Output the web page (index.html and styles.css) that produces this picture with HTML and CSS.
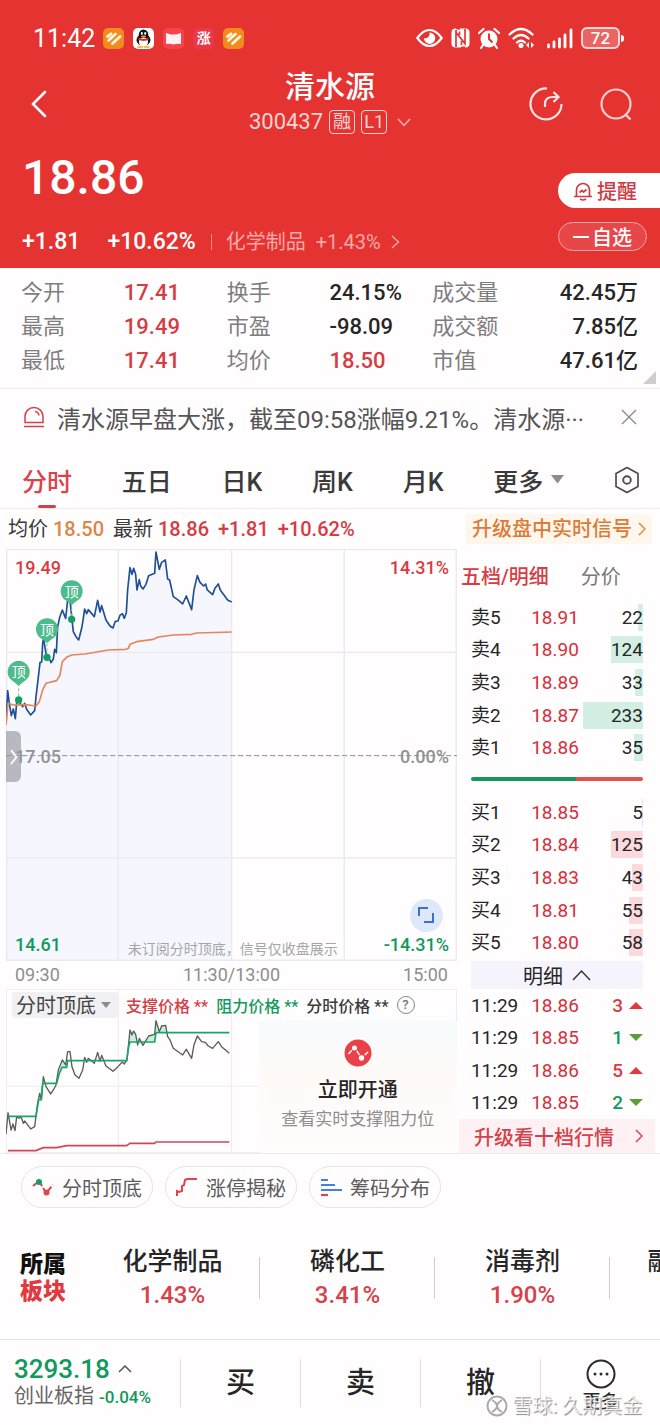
FILE: index.html
```html
<!DOCTYPE html>
<html lang="zh-CN">
  <head>
    <meta charset="UTF-8" />
    <meta name="viewport" content="width=device-width, initial-scale=1.0" />
    <title>清水源 300437</title>
    <link rel="stylesheet" href="styles.css">
  </head>
  <body>
    <header class="header">
      <div class="status">
        <span class="clock">11:42</span>
        <div class="apps">
          <svg viewBox="0 0 21 21"><rect width="21" height="21" rx="5" fill="#f28a1c"/><path d="M4.500 8.500 8 5.800M5.500 12.500l7-6.500M9.500 15.500l7.500-7" stroke="#fff3d8" stroke-width="2.900" fill="none" stroke-linecap="round"/></svg>
          <svg viewBox="0 0 21 21"><rect width="21" height="21" rx="5" fill="#fff"/><ellipse cx="10.500" cy="12" rx="7" ry="6" fill="#111"/><ellipse cx="10.500" cy="7" rx="4.800" ry="5.500" fill="#111"/><ellipse cx="10.500" cy="14" rx="4.600" ry="4.600" fill="#fff"/><path d="M5.500 9.500q5 3 10 0l.3 2.300q-5 2.200-10.600 0z" fill="#e02a2a"/><ellipse cx="8.800" cy="5.500" rx="1" ry="1.400" fill="#fff"/><ellipse cx="12.200" cy="5.500" rx="1" ry="1.400" fill="#fff"/><ellipse cx="10.500" cy="8.300" rx="2.600" ry=".9" fill="#f4a81c"/><path d="M5 19h4.500M11.500 19H16" stroke="#f4a81c" stroke-width="1.600" stroke-linecap="round"/></svg>
          <svg viewBox="0 0 21 21"><rect width="21" height="21" rx="5" fill="#f3434f"/><path d="M3 5q3 .5 4.500 1.500h6Q15 5.500 18 5v11q-4-.6-7.500.6Q7 15.400 3 16z" fill="#fff1ee"/></svg>
          <span class="app-text">涨</span>
          <svg viewBox="0 0 21 21"><rect width="21" height="21" rx="5" fill="#f28a1c"/><path d="M4.500 8.500 8 5.800M5.500 12.500l7-6.500M9.500 15.500l7.500-7" stroke="#fff3d8" stroke-width="2.900" fill="none" stroke-linecap="round"/></svg>
        </div>
        <div class="signals">
          <svg width="27" height="20" viewBox="0 0 27 20"><path d="M1.300 10Q7 2 13.500 2t12.200 8Q20 18 13.500 18T1.300 10z" fill="none" stroke="#fff" stroke-width="2.200"/><path d="M13.500 4.500a5.700 5.700 0 1 1-5.600 5.500q2.800.8 4.500-.9t1.100-4.600z" fill="#fff"/></svg>
          <svg width="19" height="20" viewBox="0 0 19 20"><rect x=".5" y=".5" width="18" height="19" rx="4" fill="#fff"/><path d="M5 19V4.500l9 11V1M9 1l-4-.5M10 19.500 14 19M5 6.500V2M8.500 3.500 8.500 7M10.500 13v4" fill="none" stroke="#e43331" stroke-width="1.700"/></svg>
          <svg width="22" height="22" viewBox="0 0 22 22"><circle cx="11" cy="12" r="8.500" fill="#fff"/><path d="M1 6 5.500 2M21 6l-4.500-4M5 18l-2 3M17 18l2 3" stroke="#fff" stroke-width="2.200" stroke-linecap="round"/><path d="M11 6.500V12l3.500 3.500" stroke="#e43331" stroke-width="2" fill="none"/></svg>
          <svg width="27" height="22" viewBox="0 0 27 22"><path d="M1.500 7.500q11.500-11 23 0M5.500 11.500q7.500-7 15 0M9 15.500q4-3.500 8 0" fill="none" stroke="#fff" stroke-width="2.300" stroke-linecap="round"/><circle cx="13" cy="18.500" r="2.500" fill="#fff"/><path d="M18 18l3-3v6zM26 18l-3-3v6z" fill="#fff"/></svg>
          <svg class="bars" width="26" height="21" viewBox="0 0 26 21"><path d="M1.500 19v-2M7 19v-5M12.500 19v-8M18 19V7M24 19V2" stroke="#fff" stroke-width="2.800" stroke-linecap="round"/></svg>
          <span class="battery">72</span>
        </div>
      </div>

      <div class="title-bar">
        <button class="icon-btn" aria-label="返回"><svg width="20" height="28" viewBox="0 0 20 28"><path d="M18 2 6 14l12 12" fill="none" stroke="#fff" stroke-width="2.600" stroke-linecap="round"/></svg></button>
        <div class="stock">
          <h1>清水源</h1>
          <p>300437 <span class="tag">融</span><span class="tag">L1</span>
            <svg width="14" height="9" viewBox="0 0 14 9"><path d="m1 1 6 6.500L13 1" fill="none" stroke="#f7b9b6" stroke-width="1.500"/></svg></p>
        </div>
        <div class="title-actions">
          <button class="icon-btn" aria-label="分享"><svg width="34" height="34" viewBox="0 0 34 34"><path d="M18 1.500A15.500 15.500 0 1 0 32.500 17" fill="none" stroke="#ffe6e4" stroke-width="2.200"/><path d="M16 20v-3q0-7 8-7h5M24.500 5l5 5-5 5" fill="none" stroke="#ffe6e4" stroke-width="2.200"/></svg></button>
          <button class="icon-btn" aria-label="搜索"><svg width="34" height="34" viewBox="0 0 34 34"><circle cx="17" cy="17" r="14.500" fill="none" stroke="#fdd0cd" stroke-width="2.200"/><path d="m26 27 5.500 5.500" stroke="#fdd0cd" stroke-width="2.400"/></svg></button>
        </div>
      </div>

      <div class="quote">
        <div>
          <p class="price">18.86</p>
          <p class="change"><b>+1.81</b><b>+10.62%</b><i></i><a href="#sector">化学制品 &nbsp;+1.43% <svg width="9" height="14" viewBox="0 0 9 14"><path d="m1 1 6.500 6L1 13" fill="none" stroke="#f7a5a2" stroke-width="1.500"/></svg></a></p>
        </div>
        <div class="quote-actions">
          <button class="remind"><svg width="20" height="20" viewBox="0 0 20 20"><path d="M3.500 15V9a6.500 6.500 0 0 1 13 0v6M1 15.500h18M7 18q3 2 6 0M6.500 11.500 9 9.500l1.500 1.500 3-2.500" fill="none" stroke="#cf3a44" stroke-width="1.700"/></svg>提醒</button>
          <button class="watch"><svg width="16" height="2" viewBox="0 0 16 2"><path d="M0 1h16" stroke="#fff" stroke-width="2"/></svg>自选</button>
        </div>
      </div>
    </header>

    <section class="stats">
      <span>今开</span><b class="red">17.41</b><span>换手</span><b>24.15%</b><span>成交量</span><b>42.45万</b>
      <span>最高</span><b class="red">19.49</b><span>市盈</span><b>-98.09</b><span>成交额</span><b>7.85亿</b>
      <span>最低</span><b class="red">17.41</b><span>均价</span><b class="red">18.50</b><span>市值</span><b>47.61亿</b>
    </section>

    <div class="news">
      <svg width="22" height="22" viewBox="0 0 22 22"><path d="M2 16.500V10.500a9 9 0 0 1 18 0v6zM1 20.500h20M12 5.500q3.500.5 4 4" fill="none" stroke="#d8404b" stroke-width="1.500"/></svg>
      <a href="#news">清水源早盘大涨，截至09:58涨幅9.21%。清水源···</a>
      <button class="icon-btn" aria-label="关闭"><svg width="16" height="16" viewBox="0 0 16 16"><path d="m1 1 14 14M15 1 1 15" stroke="#8b8b8b" stroke-width="1.400"/></svg></button>
    </div>

    <nav class="tabs">
      <button class="active">分时</button>
      <button>五日</button>
      <button>日K</button>
      <button>周K</button>
      <button>月K</button>
      <button>更多<svg width="13" height="9" viewBox="0 0 13 9"><path d="M0 0h13L6.500 8.500z" fill="#8c8c8c"/></svg></button>
      <button aria-label="设置"><svg width="26" height="28" viewBox="0 0 26 28"><path d="M13 1.500 24 7.500v13l-11 6-11-6v-13z" fill="none" stroke="#4c4c4c" stroke-width="1.700" stroke-linejoin="round"/><circle cx="13" cy="14" r="3.800" fill="none" stroke="#4c4c4c" stroke-width="1.900"/></svg></button>
    </nav>

    <div class="info">
      <p>均价 <span class="orange">18.50</span></p>
      <p>最新 <span class="red">18.86</span></p>
      <p class="red">+1.81</p>
      <p class="red">+10.62%</p>
      <a class="upgrade" href="#signal">升级盘中实时信号<svg width="8" height="14" viewBox="0 0 8 14"><path d="m1 1 6 6-6 6" fill="none" stroke="#e08a45" stroke-width="1.500"/></svg></a>
    </div>

    <main class="main">
      <div class="left">
        <div class="chart">
          <svg class="plot" viewBox="18 27 1353 1236">
            <path fill="#f6f6fe" d="M18 552 23 452 34 527 46 536 56 480 80 508 92 525 104 512 114 420 131 295 141 352 153 368 169 338 179 232 187 210 197 235 203 180 210 180 216 238 236 300 254 207 283 230 293 181 318 240 339 264 379 218 390 83 407 103 411 150 429 147 446 107 464 100 468 36 478 88 496 60 509 120 520 170 548 192 575 209 592 107 622 150 638 164 655 132 683 180 695 186V1262H18z"/>
            <path stroke="#e9e9ee" stroke-width="4" fill="none" d="M18 29H1371M18 337H1371M18 954H1371M18 1261H1371M20 27V1262M355 27V1262M695 27V1262M1033 27V1262M1369 27V1262"/>
            <path stroke="#8f8f96" stroke-width="3" stroke-dasharray="16 8" d="M18 647H1371"/>
            <polyline fill="none" stroke="#1f4f96" stroke-width="5" stroke-linejoin="round" points="18,552 23,452 28,490 34,527 40,507 46,536 50,488 56,480 62,492 68,500 74,490 80,508 92,525 104,512 108,470 114,420 120,368 125,366 128,310 131,295 136,330 141,352 150,360 153,368 160,357 164,328 169,338 173,260 179,232 187,210 197,235 203,180 210,180 216,238 220,275 228,290 236,300 245,265 250,235 254,207 260,221 265,209 283,230 293,181 300,216 305,197 318,240 330,258 339,264 346,244 354,243 360,226 367,221 373,235 379,218 383,150 390,83 396,103 401,85 407,103 411,150 418,119 422,138 429,147 438,133 446,107 464,100 468,36 478,88 485,67 496,60 503,117 509,120 520,170 533,179 548,192 559,168 575,209 582,150 592,107 600,127 611,138 617,132 622,150 638,164 645,145 655,132 661,150 683,180 695,186"/>
            <polyline fill="none" stroke="#e58558" stroke-width="5" stroke-linejoin="round" points="18,554 24,490 40,495 75,494 108,498 118,485 128,450 138,430 170,422 180,405 187,365 200,352 215,345 255,342 325,330 378,328 385,325 390,313 410,305 460,298 475,291 520,285 575,283 590,279 695,276"/>
            <g class="pin">
              <path d="M56 430V480M141 310V352M215 190V238" stroke="#7bbfa0" stroke-width="3" stroke-dasharray="9 6"/>
              <g fill="#4dbb8c"><path d="M56 437 41 425a33 33 0 1 1 30 0z"/><path d="M141 309l-15-12a33 33 0 1 1 30 0z"/><path d="M215 195l-15-12a33 33 0 1 1 30 0z"/></g>
              <g fill="#14a05f"><circle cx="56" cy="480" r="11"/><circle cx="141" cy="352" r="11"/><circle cx="215" cy="238" r="11"/></g>
              <text x="56" y="412">顶</text><text x="141" y="285">顶</text><text x="215" y="171">顶</text>
            </g>
          </svg>
          <span class="mark top-left red">19.49</span>
          <span class="mark top-right red">14.31%</span>
          <span class="mark mid-left">17.05</span>
          <span class="mark mid-right">0.00%</span>
          <span class="mark bottom-left green">14.61</span>
          <span class="mark bottom-right green">-14.31%</span>
          <span class="mark notice">未订阅分时顶底，信号仅收盘展示</span>
          <button class="drawer" aria-label="展开"><svg width="8" height="16" viewBox="0 0 8 16"><path d="m1 1 5.500 7L1 15" fill="none" stroke="#fff" stroke-width="1.800"/></svg></button>
          <button class="expand" aria-label="全屏"><svg width="18" height="18" viewBox="0 0 18 18"><path d="M2 10V2h9M16 7v9H7" fill="none" stroke="#3e6fd0" stroke-width="2"/></svg></button>
        </div>
        <div class="axis"><span>09:30</span><span>11:30/13:00</span><span>15:00</span></div>

        <div class="sub">
          <svg class="plot" viewBox="18 267 1353 493">
            <path stroke="#ececf0" stroke-width="3" fill="none" d="M18 268H1371M18 559H1371M18 758H1371M19 267V760M355 267V760M695 267V760M1370 267V760"/>
            <path fill="#c4f0dc" d="M116 600 124 560 128 550 124 598zM178 520 187 480 197 495 203 470 200 502 186 502zM386 440 390 390 407 403 413 426H390zM429 426 446 408 464 403V426zM468 398V362L478 395 485 378 497 376 501 398z"/>
            <polyline fill="none" stroke="#5b5b5b" stroke-width="4" stroke-linejoin="round" points="18,703 24,638 33,690 39,672 45,692 50,650 57,655 63,650 70,670 74,663 92,687 104,680 112,615 119,580 124,600 130,530 138,560 152,582 160,570 168,555 175,510 187,480 197,495 203,455 210,455 216,500 225,525 237,535 248,510 254,472 260,487 265,475 283,490 293,457 300,484 305,466 318,498 339,514 354,500 367,486 373,492 381,480 384,450 390,390 396,405 401,393 407,403 413,435 418,415 429,436 446,408 464,403 468,362 478,395 485,378 497,376 503,410 510,420 520,445 548,465 559,448 575,475 582,435 592,408 605,425 616,427 625,438 638,445 655,425 665,440 688,460"/>
            <polyline fill="none" stroke="#18a566" stroke-width="5" points="24,649 108,649 116,600 124,598 128,550 170,550 178,520 186,502 200,502 203,482 380,482 386,440 390,426 464,426 468,398 688,398"/>
            <polyline fill="none" stroke="#c94a57" stroke-width="5" points="24,752 108,752 130,743 170,743 200,737 380,737 390,730 464,730 468,726 688,726"/>
          </svg>
          <div class="sub-head">
            <label class="picker"><select aria-label="指标"><option>分时顶底</option></select></label>
            <span class="red">支撑价格 **</span>
            <span class="green">阻力价格 **</span>
            <span>分时价格 **</span>
            <button class="help" aria-label="说明">?</button>
          </div>
          <a class="promo" href="#open">
            <svg width="28" height="28" viewBox="0 0 28 28"><circle cx="14" cy="14" r="13.500" fill="#ea4047"/><path d="m4.500 15 6-6.500 7 10.500 6.500-6" fill="none" stroke="#fff" stroke-width="1.500" stroke-dasharray="5 1.500"/><circle cx="10.500" cy="9" r="2.500" fill="#fff"/><circle cx="17.500" cy="19" r="2.700" fill="#fff"/></svg>
            <strong>立即开通</strong>
            <span>查看实时支撑阻力位</span>
          </a>
        </div>
      </div>

      <aside class="book">
        <div class="book-tabs"><button class="red">五档/明细</button><button>分价</button></div>
        <table class="levels sell">
          <tr><th>卖5</th><td>18.91</td><td><span style="--w:9%">22</span></td></tr>
          <tr><th>卖4</th><td>18.90</td><td><span style="--w:53%">124</span></td></tr>
          <tr><th>卖3</th><td>18.89</td><td><span style="--w:14%">33</span></td></tr>
          <tr><th>卖2</th><td>18.87</td><td><span style="--w:100%">233</span></td></tr>
          <tr><th>卖1</th><td>18.86</td><td><span style="--w:15%">35</span></td></tr>
        </table>
        <div class="ratio"></div>
        <table class="levels buy">
          <tr><th>买1</th><td>18.85</td><td><span style="--w:2%">5</span></td></tr>
          <tr><th>买2</th><td>18.84</td><td><span style="--w:53%">125</span></td></tr>
          <tr><th>买3</th><td>18.83</td><td><span style="--w:18%">43</span></td></tr>
          <tr><th>买4</th><td>18.81</td><td><span style="--w:23%">55</span></td></tr>
          <tr><th>买5</th><td>18.80</td><td><span style="--w:24%">58</span></td></tr>
        </table>
        <button class="detail">明细<svg width="19" height="12" viewBox="0 0 19 12"><path d="m1 11 8.500-9L18 11" fill="none" stroke="#333" stroke-width="1.500"/></svg></button>
        <table class="levels trades">
          <tr><th>11:29</th><td>18.86</td><td class="red">3<i class="up"></i></td></tr>
          <tr><th>11:29</th><td>18.85</td><td class="green">1<i class="down"></i></td></tr>
          <tr><th>11:29</th><td>18.86</td><td class="red">5<i class="up"></i></td></tr>
          <tr><th>11:29</th><td>18.85</td><td class="green">2<i class="down"></i></td></tr>
        </table>
        <a class="ten" href="#level2">升级看十档行情<svg width="8" height="14" viewBox="0 0 8 14"><path d="m1 1 6 6-6 6" fill="none" stroke="#cf4a5a" stroke-width="1.500"/></svg></a>
      </aside>
    </main>

    <div class="chips">
      <button><svg width="22" height="20" viewBox="0 0 22 20"><path d="m1 9 6-5 7 12 7-8" fill="none" stroke="#e0454b" stroke-width="2" stroke-dasharray="6 2"/><circle cx="7" cy="5" r="3" fill="#14a05f"/><circle cx="14.500" cy="15.500" r="3" fill="#e0454b"/></svg>分时顶底</button>
      <button><svg width="22" height="20" viewBox="0 0 22 20"><path d="M1 19v-5l2 1 3-1V9l2-1 1-5 2-1h10" fill="none" stroke="#df4450" stroke-width="2"/></svg>涨停揭秘</button>
      <button><svg width="22" height="20" viewBox="0 0 22 20"><path d="M1 3h7M1 8h14M1 13h21" stroke="#3f7ff0" stroke-width="2.200"/><path d="M1 18h7" stroke="#e0454b" stroke-width="2.200"/></svg>筹码分布</button>
    </div>

    <section class="sectors" id="sector">
      <h2>所属<br><span>板块</span></h2>
      <ul>
        <li>化学制品<b>1.43%</b></li>
        <li>磷化工<b>3.41%</b></li>
        <li>消毒剂<b>1.90%</b></li>
        <li>融资融券<b>&nbsp;</b></li>
      </ul>
    </section>

    <footer class="footer">
      <div class="index">
        <p class="points">3293.18 <svg width="14" height="8" viewBox="0 0 14 8"><path d="m1 7 6-6 6 6" fill="none" stroke="#555" stroke-width="1.500"/></svg></p>
        <p>创业板指 <span class="green">-0.04%</span></p>
      </div>
      <button>买</button>
      <button>卖</button>
      <button>撤</button>
      <button class="more"><svg width="30" height="30" viewBox="0 0 30 30"><circle cx="15" cy="15" r="13.500" fill="none" stroke="#2b2b2b" stroke-width="2"/><g fill="#2b2b2b"><circle cx="9" cy="15" r="1.500"/><circle cx="15" cy="15" r="1.500"/><circle cx="21" cy="15" r="1.500"/></g></svg>更多</button>
      <div class="watermark"><svg width="22" height="22" viewBox="0 0 22 22"><circle cx="11" cy="11" r="9.500" fill="#fff" fill-opacity=".7" stroke="#aaa" stroke-width="2"/><path d="M6 5q5 3 5 6t5 6M16 5q-5 3-5 6t-5 6" fill="none" stroke="#aaa" stroke-width="2"/></svg>雪球: 久期真金</div>
    </footer>
  </body>
</html>
```
FILE: styles.css
```css
* {
  box-sizing: border-box;
}

body {
  margin: 0;
  font-family: Roboto, 'Noto Sans CJK SC', sans-serif;
  font-size: 20px;
  color: #3a3a3a;
  background-color: #fffdfe;
}

p,
h1,
h2,
ul {
  margin: 0;
  padding: 0;
}

a {
  color: inherit;
  text-decoration: none;
}

button {
  padding: 0;
  border: none;
  background: none;
  font: inherit;
  color: inherit;
  cursor: pointer;
}

svg {
  display: block;
  flex: none;
}

.red {
  color: #d63c43;
}

.green {
  color: #12995c;
}

.orange {
  color: #d9884a;
}

/* header */

.header {
  background-color: #e43331;
  color: white;
  padding: 16px 0 12px;
}

.status {
  display: flex;
  align-items: center;
  height: 44px;
  padding: 0 40px 0 33px;
}

.clock {
  font-size: 25px;
  margin-right: 8px;
}

.apps {
  display: flex;
  gap: 9px;
}

.apps svg,
.app-text {
  width: 21px;
  height: 21px;
}

.app-text {
  border-radius: 5px;
  background-color: #e9384c;
  font-size: 14px;
  font-weight: bold;
  line-height: 20px;
  text-align: center;
}

.signals {
  display: flex;
  align-items: center;
  gap: 8px;
  margin-left: auto;
}

.bars {
  margin-left: 4px;
}

.battery {
  position: relative;
  width: 39px;
  height: 22px;
  border: 2px solid #ffd9d7;
  border-radius: 6px;
  background-color: #ec6462;
  font-size: 17px;
  font-weight: 500;
  line-height: 18px;
  text-align: center;
}

.battery::after {
  content: '';
  position: absolute;
  right: -6px;
  top: 6px;
  width: 3px;
  height: 7px;
  border-radius: 0 3px 3px 0;
  background-color: #fff;
}

.icon-btn {
  flex: none;
}

.title-bar {
  display: grid;
  grid-template-columns: 1fr auto 1fr;
  align-items: center;
  padding: 9px 27px;
}

.title-bar > .icon-btn {
  justify-self: start;
}

.stock {
  text-align: center;
}

.stock h1 {
  font-size: 30px;
  font-weight: 500;
  line-height: 36px;
}

.stock p {
  display: flex;
  align-items: center;
  gap: 6px;
  font-size: 22px;
  line-height: 34px;
  color: #fbd3d1;
}

.tag {
  min-width: 26px;
  height: 24px;
  border: 1px solid #fbd3d1;
  border-radius: 4px;
  font-size: 18px;
  line-height: 22px;
}

.stock svg {
  margin-left: 4px;
}

.title-actions {
  display: flex;
  justify-content: flex-end;
  gap: 36px;
}

.quote {
  display: flex;
  justify-content: space-between;
  align-items: flex-end;
  padding-left: 22px;
}

.price {
  font-size: 48px;
  font-weight: 500;
  line-height: 60px;
  margin-bottom: 20px;
}

.change {
  display: flex;
  align-items: center;
  line-height: 28px;
  color: #f9a9a6;
}

.change b {
  margin-right: 27px;
  font-size: 23px;
  font-weight: 500;
  color: white;
}

.change i {
  width: 1px;
  height: 16px;
  margin: 0 14px 0 -12px;
  background-color: #f08a88;
}

.change a {
  display: flex;
  align-items: center;
  gap: 10px;
}

.quote-actions {
  width: 102px;
}

.remind,
.watch {
  display: flex;
  align-items: center;
}

.remind {
  gap: 4px;
  width: 100%;
  height: 35px;
  margin-bottom: 14px;
  padding-left: 15px;
  border-radius: 18px 0 0 18px;
  background-color: #fff;
  color: #cf3a44;
  font-weight: 500;
}

.watch {
  justify-content: center;
  gap: 3px;
  width: 89px;
  height: 29px;
  margin-bottom: 5px;
  border: 1px solid #f5a3a1;
  border-radius: 15px;
  background-color: #e8474a;
  font-weight: 500;
}

/* figures of the day */

.stats {
  position: relative;
  display: grid;
  grid-template-columns: repeat(6, 1fr);
  padding: 8px 22px 10px 21px;
  border-bottom: 1px solid #ebebee;
  font-size: 22px;
  line-height: 34px;
  color: #7e7e7e;
}

.stats b {
  font-weight: 500;
  white-space: nowrap;
}

.stats b:not(.red) {
  color: #262626;
}

.stats b:nth-child(6n) {
  text-align: right;
}

.stats::after {
  content: '';
  position: absolute;
  right: 4px;
  bottom: 4px;
  border-left: 13px solid transparent;
  border-bottom: 13px solid #cdcdcd;
}

.news {
  display: flex;
  align-items: center;
  gap: 12px;
  height: 56px;
  padding: 0 23px;
  font-size: 24px;
  color: #555;
}

.news a {
  flex: 1;
  white-space: nowrap;
  overflow: hidden;
}

.tabs {
  display: flex;
  justify-content: space-between;
  height: 64px;
  padding: 0 20px 0 22px;
  border-bottom: 1px solid #ebebee;
  font-size: 25px;
  font-weight: 500;
}

.tabs button {
  position: relative;
  display: flex;
  align-items: center;
  gap: 8px;
  padding-top: 6px;
}

.tabs .active {
  color: #d8444c;
}

.tabs .active::after {
  content: '';
  position: absolute;
  left: 16px;
  bottom: 0;
  width: 18px;
  height: 3px;
  border-radius: 2px;
  background-color: #d0404a;
}

.info {
  display: flex;
  align-items: baseline;
  gap: 9px;
  padding: 5px 8px;
  line-height: 30px;
  white-space: nowrap;
}

.info .red,
.info .orange {
  font-weight: 500;
}

.upgrade {
  display: flex;
  align-items: center;
  gap: 6px;
  margin-left: auto;
  padding: 0 6px;
  background-color: #fff6ee;
  color: #dd7b35;
  font-weight: 500;
}

/* charts */

.main {
  display: grid;
  grid-template-columns: minmax(0, 9fr) minmax(0, 4fr);
  border-bottom: 1px solid #ebebee;
}

.left {
  padding-left: 6px;
}

.chart {
  position: relative;
}

.plot {
  width: 100%;
}

.pin text {
  font-size: 42px;
  fill: #fff;
  text-anchor: middle;
}

.mark {
  position: absolute;
  font-size: 18px;
  font-weight: 500;
  line-height: 20px;
}

.top-left,
.top-right {
  top: 9px;
}

.top-left,
.mid-left,
.bottom-left {
  left: 9px;
}

.top-right,
.mid-right,
.bottom-right {
  right: 8px;
}

.mid-left,
.mid-right {
  top: 50%;
  margin-top: -8px;
  color: #929292;
}

.bottom-left,
.bottom-right {
  bottom: 6px;
}

.notice {
  left: 27%;
  bottom: 2px;
  font-size: 14px;
  font-weight: normal;
  color: #a5a5a5;
}

.drawer {
  position: absolute;
  left: 0;
  top: 182px;
  width: 15px;
  height: 51px;
  padding-left: 4px;
  border-radius: 0 6px 6px 0;
  background-color: rgba(150, 150, 158, 0.65);
}

.expand {
  position: absolute;
  right: 14px;
  bottom: 29px;
  display: grid;
  place-items: center;
  width: 33px;
  height: 33px;
  border-radius: 50%;
  background-color: #dde8fa;
}

.axis {
  display: flex;
  justify-content: space-between;
  padding: 0 9px;
  font-size: 18px;
  line-height: 28px;
  color: #8e8e8e;
}

.sub {
  display: grid;
  grid-template-columns: 56fr 44fr;
  grid-template-rows: 32px 1fr;
}

.sub .plot {
  grid-area: 1 / 1 / 3 / 3;
}

.sub-head {
  grid-area: 1 / 1 / 2 / 3;
  display: flex;
  align-items: center;
  gap: 8px;
  padding-left: 6px;
  font-size: 16px;
  font-weight: 500;
  white-space: nowrap;
}

.picker {
  display: flex;
  align-items: center;
  width: 106px;
  height: 26px;
  padding-left: 4px;
  border-radius: 3px;
  background-color: #f1f0f2;
}

.picker::after {
  content: '';
  margin-left: 5px;
  border: 5px solid transparent;
  border-top: 6px solid #8c8c8c;
  border-bottom: none;
}

.picker select {
  appearance: none;
  height: 26px;
  padding: 0;
  border: none;
  background: none;
  font: 20px/26px 'Noto Sans CJK SC', sans-serif;
  color: #444;
}

.help {
  width: 18px;
  height: 18px;
  border: 1px solid #888;
  border-radius: 50%;
  font-size: 13px;
  line-height: 16px;
  color: #777;
}

.promo {
  grid-area: 2 / 2;
  display: flex;
  flex-direction: column;
  align-items: center;
  padding-top: 18px;
  background: linear-gradient(#f6fbfd, #fffaf8 40%, #fffcfc);
}

.promo strong {
  margin-top: 8px;
  font-weight: 500;
  line-height: 30px;
  color: #262626;
}

.promo span {
  font-size: 17px;
  line-height: 28px;
  color: #8e8e8e;
}

/* order book */

.book {
  display: flex;
  flex-direction: column;
  padding: 0 17px 0 14px;
}

.book-tabs {
  display: flex;
  gap: 32px;
  height: 52px;
  margin-left: -10px;
  color: #777;
}

.book-tabs .red {
  font-weight: 500;
}

.levels {
  height: 163px;
  width: 100%;
  border-collapse: collapse;
  table-layout: fixed;
  font-size: 19px;
  line-height: 27px;
}

.levels th,
.levels td {
  padding: 0;
  font-weight: normal;
  text-align: left;
  color: #262626;
}

.levels td:nth-child(2) {
  color: #d6303a;
}

.levels th,
.levels td:last-child {
  width: 35%;
}

.levels td:last-child {
  text-align: right;
}

.levels td span {
  display: block;
  background: linear-gradient(#d3efe3, #d3efe3) no-repeat right / var(--w) 100%;
}

.buy td span {
  background-image: linear-gradient(#fcd9dd, #fcd9dd);
}

.ratio {
  height: 4px;
  margin: 13px 0 15px;
  border-radius: 2px;
  background: linear-gradient(to right, #14995a 61%, #e2504f 61%);
}

.detail {
  display: flex;
  justify-content: center;
  align-items: center;
  gap: 9px;
  height: 28px;
  margin-top: 2px;
  background-color: #f5f4fd;
  color: #262626;
}

.levels.trades {
  height: 130px;
}

.trades td.red {
  color: #d63c43;
}

.trades td.green {
  color: #12995c;
}

.trades td:last-child {
  font-weight: 500;
}

.up,
.down {
  display: inline-block;
  margin-left: 6px;
  vertical-align: 3px;
  border: 7px solid transparent;
}

.up {
  border-top: none;
  border-bottom: 7px solid #e23a3a;
}

.down {
  border-bottom: none;
  border-top: 7px solid #5c9f3a;
}

.ten {
  display: flex;
  justify-content: space-between;
  align-items: center;
  flex: 1;
  margin: 0 -12px;
  padding: 0 12px 0 15px;
  background-color: #fff0f3;
  color: #d6404a;
  font-weight: 500;
}

/* bottom */

.chips {
  display: flex;
  gap: 12px;
  padding: 12px 21px 18px;
}

.chips button {
  display: flex;
  align-items: center;
  gap: 8px;
  height: 42px;
  padding: 0 10px;
  border: 1px solid #e6e4e6;
  border-radius: 21px;
  color: #5c5c5c;
}

.sectors {
  display: flex;
  align-items: center;
  height: 114px;
  padding: 0 0 10px 20px;
  border-bottom: 1px solid #e4e4e8;
}

.sectors h2 {
  flex: none;
  width: 65px;
  font-size: 23px;
  font-weight: 900;
  line-height: 27px;
  color: #111;
}

.sectors h2 span {
  color: #e2383f;
}

.sectors ul {
  display: flex;
  flex: 1;
  overflow: hidden;
  list-style: none;
}

.sectors li {
  position: relative;
  flex: 0 0 175px;
  text-align: center;
  font-size: 25px;
  font-weight: 500;
  line-height: 34px;
  color: #262626;
}

.sectors li:not(:last-child)::after {
  content: '';
  position: absolute;
  right: 0;
  top: 12px;
  height: 42px;
  border-right: 1px solid #cfcfd2;
}

.sectors b {
  display: block;
  font-size: 24px;
  font-weight: 500;
  line-height: 32px;
  color: #d6424a;
}

.footer {
  position: relative;
  display: grid;
  grid-template-columns: 3fr repeat(4, 2fr);
  align-items: center;
  height: 85px;
}

.index {
  padding-left: 14px;
  line-height: 24px;
  white-space: nowrap;
  color: #666;
}

.index .green {
  font-size: 17px;
  font-weight: 500;
}

.points {
  display: flex;
  align-items: center;
  gap: 8px;
  margin-bottom: 3px;
  font-size: 26px;
  font-weight: 500;
  color: #12995c;
}

.footer button {
  height: 48px;
  border-left: 1px solid #dcdcdf;
  font-size: 29px;
  line-height: 48px;
  font-weight: 500;
  color: #262626;
}

.footer .more {
  display: flex;
  flex-direction: column;
  align-items: center;
  font-size: 18px;
  line-height: 26px;
}

.watermark {
  position: absolute;
  right: 18px;
  bottom: 6px;
  display: flex;
  align-items: center;
  gap: 4px;
  font-size: 20px;
  line-height: 26px;
  color: rgba(255, 255, 255, 0.8);
  text-shadow: 1px 1px 1px #888;
}
```
